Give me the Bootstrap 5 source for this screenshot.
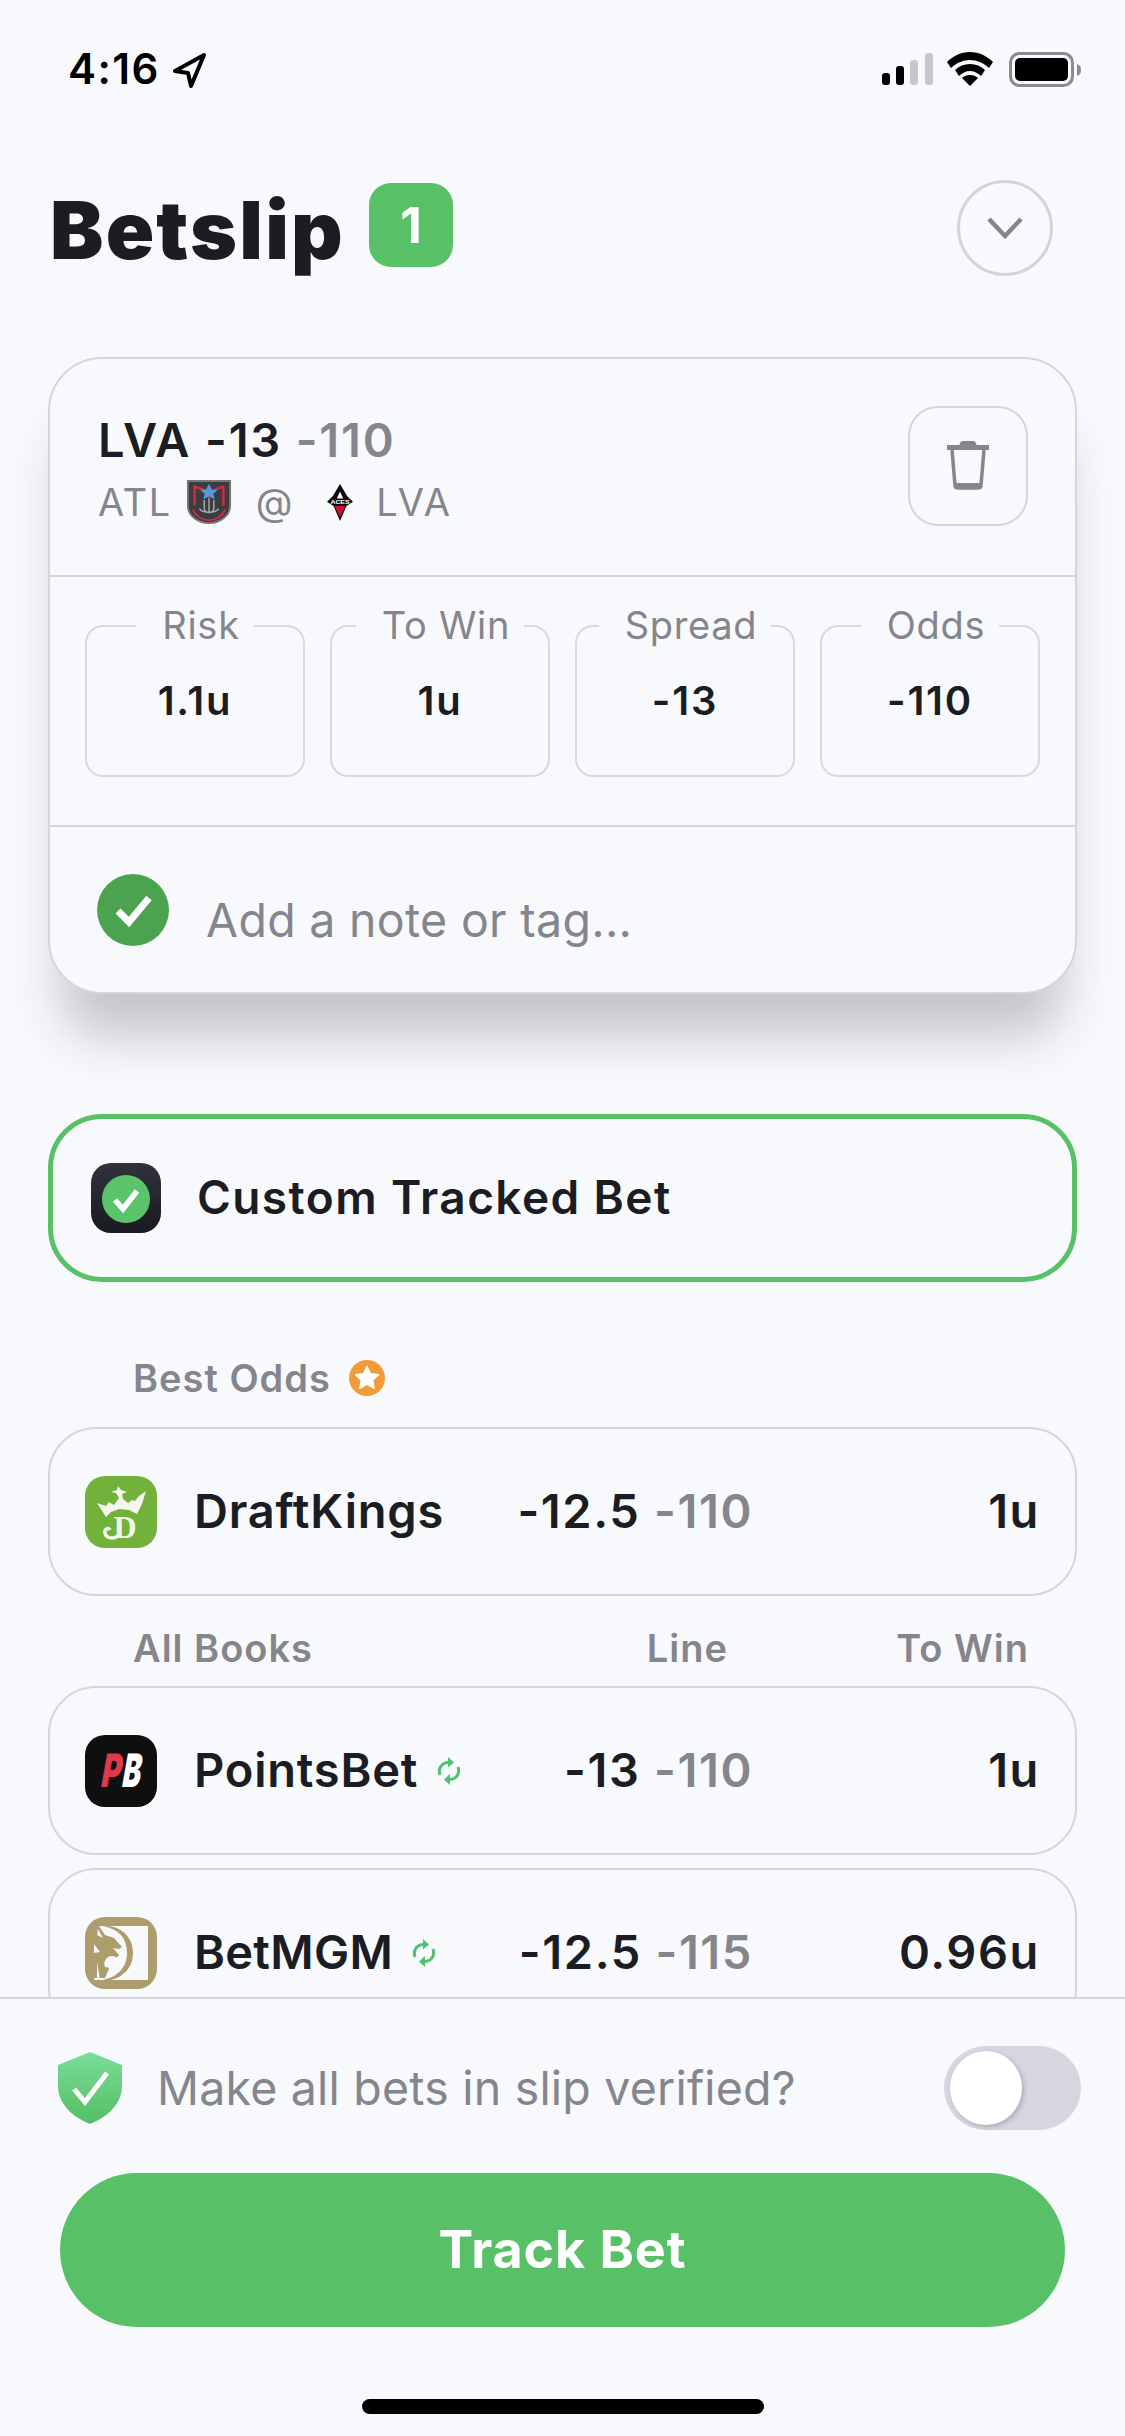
<!DOCTYPE html>
<html lang="en">
<head>
<meta charset="utf-8">
<title>Betslip</title>
<link rel="stylesheet" href="https://cdn.jsdelivr.net/npm/bootstrap@5.3.0/dist/css/bootstrap.min.css">
<style>
html,body{margin:0;background:#f8f9fd}
body{font-family:Inter,"Liberation Sans",sans-serif;color:#1c1d22;width:1125px;height:2436px;overflow:hidden}
.screen{width:1125px;height:2436px;display:flex;flex-direction:column;background:#f8f9fd}
.scroll-area{flex:1 1 auto;min-height:0;overflow:hidden;padding:0 48px}
.status{height:120px;margin:0 -48px;padding:52px 43px 0 68px;display:flex;justify-content:space-between;align-items:flex-start}
.clock{font-size:42px;line-height:34px;font-weight:600;letter-spacing:1.5px;color:#000}
.nav-arrow{margin-left:11px}
.wifi-gap{margin-left:13px}
.top-head{height:96px;margin-top:60px;padding:0 24px 0 2px}
.page-title{font-size:80px;line-height:96px;font-weight:900;margin:0;letter-spacing:2.2px;color:#1c1d22;padding-top:3px}
.count-chip{width:84px;height:84px;border-radius:22px;background:#58c167;color:#fff;font-size:50px;font-weight:700;margin-left:24px;margin-top:-6px}
.round-btn{width:96px;height:96px;border-radius:50%;border:3px solid #d3d4d9;background:transparent;padding:0}
.slip{margin-top:81px;height:637px;border:2px solid #d5d6dd;border-radius:54px;background:#f8f9fd;box-shadow:0 56px 50px -14px rgba(30,32,45,.24)}
.slip-top{height:218px;padding:53px 47px 0 48px;border-bottom:2px solid #d5d6dd}
.pick{font-size:47px;line-height:56px;font-weight:600;letter-spacing:1.8px}
.muted-ink{color:#85858c}
.teams{font-size:38px;line-height:50px;color:#85858c;letter-spacing:1.6px;margin-top:9px}
.trash-box{width:120px;height:120px;border:2px solid #d5d6dd;border-radius:30px;background:transparent;padding:0;margin-top:-6px}
.atl-logo{margin-left:14px}
.at-sign{margin-left:24px}
.aces-logo{margin-left:33px}
.lva-code{margin-left:23px;letter-spacing:2.6px}
.slip-mid{height:250px;padding:48px 35px 0 35px;gap:25px;border-bottom:2px solid #d5d6dd}
.field{position:relative;width:220px;height:152px;border:2px solid #d9dae1;border-radius:18px;font-size:40px;font-weight:600;letter-spacing:1.8px}
.field-label{position:absolute;top:-30px;left:0;right:0;margin:auto;width:max-content;padding:0 14px 0 26px;background:#f8f9fd;font-size:38px;line-height:56px;font-weight:400;color:#85858c;letter-spacing:.7px}
.slip-note{padding:47px 48px 0 47px}
.note-text{font-size:46.5px;line-height:56px;color:#85858c;margin:18px 0 0 37px;letter-spacing:.3px}
.custom-row{margin-top:120px;height:168px;border:5px solid #58c167;border-radius:54px;padding:0 38px;font-size:46px;font-weight:600;letter-spacing:1.4px}
.custom-row svg{margin-right:36px}
.custom-row span{margin-top:-2px}
.sec-label{font-size:38px;line-height:46px;font-weight:600;color:#85858c;padding-left:85px;letter-spacing:1px}
.sec-best{margin-top:71px;height:50px;gap:18px}
.sec-all{margin-top:27px;height:50px;padding-right:48px}
.book{height:169px;border:2px solid #d5d6dd;border-radius:48px;padding:0 35px 0 35px;font-size:47px;font-weight:600;flex:none}
.book svg.logo{margin-right:37px;flex:none}
.bk-name{letter-spacing:.8px}
.bk-tight{letter-spacing:.3px}
.sync{margin-left:19px;flex:none}
.ln{color:#1c1d22;letter-spacing:1.6px}
.win{width:287px;text-align:right;flex:none;letter-spacing:1.6px}
.line-head{margin-left:auto}
.win-head{width:301px;text-align:right}
.stack-first{margin-top:13px}
.stack-gap{margin-top:13px}
.sec-best + .book{margin-top:24px}
.bottom{flex:none;height:439px;border-top:2px solid #d5d6dd;padding:47px 44px 0 58px;position:relative}
.verify{font-size:46.5px;color:#85858c;line-height:56px;margin-left:35px;letter-spacing:.2px}
.toggle-pill{width:137px;height:84px;border-radius:42px;background:#d5d6e0;padding:5px 6px;flex:none}
.toggle-knob{display:block;width:72px;height:74px;border-radius:50%;background:#fff;box-shadow:2px 2px 5px rgba(0,0,0,.2)}
.track{display:block;width:1005px;height:154px;margin:43px 0 0 2px;border:0;border-radius:77px;background:#58c167;color:#fff;font-size:52px;font-weight:700;letter-spacing:.9px}
.track:hover{background:#58c167;color:#fff}
.home-bar{width:402px;height:15px;background:#000;border-radius:8px;margin:72px 0 0 304px}
</style>
</head>
<body>
<div class="screen">
  <div class="scroll-area">
    <div class="status">
      <div class="d-flex align-items-start">
        <span class="clock">4:16</span>
        <svg class="nav-arrow" width="36" height="36" viewBox="0 0 36 36"><path d="M33 3 4 19l13 2 3 13z" fill="none" stroke="#000" stroke-width="4" stroke-linejoin="round"/></svg>
      </div>
      <div class="d-flex align-items-start">
        <svg width="52" height="34" viewBox="0 0 52 34"><rect x="0" y="21" width="8" height="12" rx="3" fill="#000"/><rect x="14" y="14" width="8" height="19" rx="3" fill="#000"/><rect x="28" y="8" width="8" height="25" rx="3" fill="#c6c7cc"/><rect x="43" y="1" width="8" height="32" rx="3" fill="#c6c7cc"/></svg>
        <svg class="wifi-gap" width="46" height="34" viewBox="0 0 46 34"><path d="M23 0C14 0 6 4 0 10l4 6C9 11 16 8 23 8s14 3 19 8l4-6C40 4 32 0 23 0z" fill="#000"/><path d="M23 12c-6 0-11 2-15 6l4 6c3-3 7-5 11-5s8 2 11 5l4-6c-4-4-9-6-15-6z" fill="#000"/><path d="M23 23c-3 0-6 1-8 3l8 8 8-8c-2-2-5-3-8-3z" fill="#000"/></svg>
        <svg class="ms-3" width="73" height="36" viewBox="0 0 73 36"><rect x="1.5" y="1.5" width="62" height="32" rx="9" fill="none" stroke="#8b8b8f" stroke-width="3"/><rect x="6" y="6" width="53" height="23" rx="5" fill="#000"/><path d="M68 12c3 1 4 3 4 6s-1 5-4 6z" fill="#8b8b8f"/></svg>
      </div>
    </div>

    <div class="top-head d-flex align-items-center">
      <h1 class="page-title">Betslip</h1>
      <span class="count-chip d-flex align-items-center justify-content-center">1</span>
      <button class="round-btn ms-auto d-flex align-items-center justify-content-center" type="button" aria-label="Collapse">
        <svg width="38" height="24" viewBox="0 0 38 24"><path d="M3 3l16 17L35 3" fill="none" stroke="#85858c" stroke-width="4.5"/></svg>
      </button>
    </div>

    <div class="slip">
      <div class="slip-top d-flex justify-content-between align-items-start">
        <div>
          <div class="pick">LVA -13 <span class="muted-ink">-110</span></div>
          <div class="teams d-flex align-items-center">
            <span>ATL</span>
            <svg class="atl-logo" width="46" height="46" viewBox="0 0 48 48">
              <path d="M2 2h44v26c0 10-10 18-22 18S2 38 2 28z" fill="#3b3c3f" stroke="#77787b" stroke-width="2"/>
              <path d="M9 28V8l9 3 6 8 6-8 9-3v20" fill="none" stroke="#d42a43" stroke-width="2.5"/>
              <path d="M7 32c3 7 10 11 17 11s14-4 17-11" fill="none" stroke="#d42a43" stroke-width="2"/>
              <path d="M24 5l3 6 6 .5-4.5 4 1.5 6-6-3.5-6 3.5 1.500-6-4.500-4 6-.5z" fill="#5a97d6"/>
              <path d="M24 20v14M19 22v8c0 3 2 5 5 5s5-2 5-5v-8M14 31c3 5 17 5 20 0" fill="none" stroke="#a9abad" stroke-width="1.500"/>
            </svg>
            <span class="at-sign">@</span>
            <svg class="aces-logo" width="26" height="37" viewBox="0 0 32 54" preserveAspectRatio="none">
              <path d="M16 0l9 18 7 8-8 6-8 22-8-22-8-6 7-8z" fill="#0c0c0e"/>
              <path d="M16 11l4 10H12z" fill="#f8f9fd"/>
              <path d="M9 32h14l-7 16z" fill="#c9142f"/>
              <text x="16" y="28.500" text-anchor="middle" font-family="'Liberation Sans',sans-serif" font-size="8.500" font-weight="700" fill="#fff" letter-spacing="0">ACES</text>
            </svg>
            <span class="lva-code">LVA</span>
          </div>
        </div>
        <button class="trash-box d-flex align-items-center justify-content-center" type="button" aria-label="Delete">
          <svg width="44" height="50" viewBox="0 0 44 50"><path d="M16 5c0-2 1-3 3-3h6c2 0 3 1 3 3M1 6.500h42" fill="none" stroke="#85858c" stroke-width="5"/><path d="M6 9l3 35c0 2 1 3 3 3h20c2 0 3-1 3-3l3-35" fill="none" stroke="#85858c" stroke-width="3.500"/><path d="M9 42h26v3c0 2-1 3-3 3H12c-2 0-3-1-3-3z" fill="#85858c"/></svg>
        </button>
      </div>
      <div class="slip-mid d-flex">
        <div class="field d-flex align-items-center justify-content-center"><span class="field-label">Risk</span>1.1u</div>
        <div class="field d-flex align-items-center justify-content-center"><span class="field-label">To Win</span>1u</div>
        <div class="field d-flex align-items-center justify-content-center"><span class="field-label">Spread</span>-13</div>
        <div class="field d-flex align-items-center justify-content-center"><span class="field-label">Odds</span>-110</div>
      </div>
      <div class="slip-note d-flex align-items-start">
        <svg width="72" height="72" viewBox="0 0 72 72" class="flex-none"><circle cx="36" cy="36" r="36" fill="#4ba350"/><path d="M21 37l11 11 20-24" fill="none" stroke="#fff" stroke-width="7"/></svg>
        <div class="note-text">Add a note or tag...</div>
      </div>
    </div>

    <div class="custom-row d-flex align-items-center">
      <svg width="70" height="70" viewBox="0 0 70 70"><defs><linearGradient id="dk" x1="0" y1="0" x2="0" y2="1"><stop offset="0" stop-color="#31323d"/><stop offset="1" stop-color="#191a1f"/></linearGradient></defs><rect width="70" height="70" rx="20" fill="url(#dk)"/><circle cx="35" cy="36" r="24" fill="#5bc46a"/><path d="M24 37l8 9 14-18" fill="none" stroke="#fff" stroke-width="5.500"/></svg>
      <span>Custom Tracked Bet</span>
    </div>

    <div class="sec-label sec-best d-flex align-items-center">
      <span>Best Odds</span>
      <svg width="36" height="36" viewBox="0 0 36 36"><circle cx="18" cy="18" r="18" fill="#f29b38"/><path d="M18 6.500l3.500 7.300 8 1-5.900 5.500 1.600 8L18 24l-7.200 4.300 1.600-8-5.900-5.500 8-1z" fill="#fff" stroke="#fff" stroke-width="1.500" stroke-linejoin="round"/></svg>
    </div>

    <div class="book d-flex align-items-center">
      <svg class="logo" width="72" height="72" viewBox="0 0 72 72">
        <rect width="72" height="72" rx="20" fill="#72b23a"/>
        <path d="M12 27 21 30 24 26 29 29 34 22 31 17 26 16 32 14 33 10 36 14 42 16 37 18 38 23 43 27 47 24 50 25 54 20 61 15 57 28 52 38 44 34 34 33 26 36 21 41Z" fill="#f3f6ec"/>
        <text x="40" y="62" text-anchor="middle" font-family="'Liberation Serif',serif" font-size="32" font-weight="700" fill="#f3f6ec">D</text>
        <path d="M33 60c-4 3-12 3-13-3-1-4 4-6 5-3" fill="none" stroke="#f3f6ec" stroke-width="3.500"/>
      </svg>
      <span class="bk-name">DraftKings</span>
      <span class="ms-auto ln">-12.5 <span class="muted-ink">-110</span></span>
      <span class="win">1u</span>
    </div>

    <div class="sec-label sec-all d-flex align-items-center">
      <span>All Books</span>
      <span class="line-head">Line</span>
      <span class="win-head">To Win</span>
    </div>

    <div class="book stack-first d-flex align-items-center">
      <svg class="logo" width="72" height="72" viewBox="0 0 72 72">
        <rect width="72" height="72" rx="20" fill="#0f0f10"/>
        <text x="0" y="52" font-family="Inter,sans-serif" font-size="46" font-weight="900" fill="#e0394c" transform="matrix(.66 0 -.176 1 24 0)">P</text>
        <text x="0" y="52" font-family="Inter,sans-serif" font-size="46" font-weight="900" fill="#fff" transform="matrix(.6 0 -.176 1 45 0)">B</text>
      </svg>
      <span class="bk-name">PointsBet</span>
      <svg class="sync" width="24" height="30" viewBox="0 0 24 30"><path d="M3 19C1 13 4 7 11 6.500M21 11c2 6-1 12-8 12.500" fill="none" stroke="#4cc36c" stroke-width="3"/><path d="M11 1l6 5.500-6 5zM13 18l-6 5.500 6 5.500z" fill="#4cc36c"/></svg>
      <span class="ms-auto ln">-13 <span class="muted-ink">-110</span></span>
      <span class="win">1u</span>
    </div>

    <div class="book stack-gap d-flex align-items-center">
      <svg class="logo" width="72" height="72" viewBox="0 0 72 72">
        <rect width="72" height="72" rx="20" fill="#ad9c6c"/>
        <rect x="9" y="9" width="54" height="54" fill="#f8f9fd"/>
        <path d="M24 9c14 2 24 12 24 27S38 60 26 63h-8c14-3 24-12 24-27S34 12 18 9z" fill="#ad9c6c"/>
        <path d="M9 9h5l6 9 9 3 8 9-3 2-6-1 6 7c-3 5-9 7-12 5l2 9-4 9H9V36l6-1-6-8z" fill="#ad9c6c"/>
        <path d="M20 50c-2-5 1-11 7-11 5 0 8 4 6 8-1 3-8 5-13 3z" fill="#f8f9fd"/>
        <path d="M13 12l5 9-6-3zM12 45l3 18h-3z" fill="#f8f9fd"/>
      </svg>
      <span class="bk-name bk-tight">BetMGM</span>
      <svg class="sync" width="24" height="30" viewBox="0 0 24 30"><path d="M3 19C1 13 4 7 11 6.500M21 11c2 6-1 12-8 12.500" fill="none" stroke="#4cc36c" stroke-width="3"/><path d="M11 1l6 5.500-6 5zM13 18l-6 5.500 6 5.500z" fill="#4cc36c"/></svg>
      <span class="ms-auto ln">-12.5 <span class="muted-ink">-115</span></span>
      <span class="win">0.96u</span>
    </div>
  </div>

  <div class="bottom">
    <div class="d-flex align-items-center">
      <svg width="64" height="72" viewBox="0 0 64 72" class="flex-none"><defs><linearGradient id="sg" x1="0" y1="0" x2="0" y2="1"><stop offset="0" stop-color="#7cdc98"/><stop offset="1" stop-color="#52bf65"/></linearGradient></defs><path d="M32 0l32 13v21c0 17-14 31-32 38C14 65 0 51 0 34V13z" fill="url(#sg)"/><path d="M16 37l11 13 22-29" fill="none" stroke="#fff" stroke-width="5"/></svg>
      <span class="verify">Make all bets in slip verified?</span>
      <span class="toggle-pill ms-auto"><span class="toggle-knob"></span></span>
    </div>
    <button class="track btn" type="button">Track Bet</button>
    <div class="home-bar"></div>
  </div>
</div>
</body>
</html>
